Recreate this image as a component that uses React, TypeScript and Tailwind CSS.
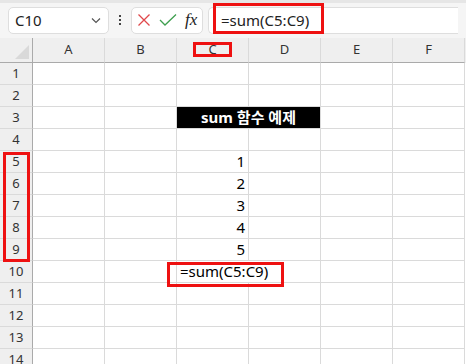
import React from "react";

const cols = ["A", "B", "C", "D", "E", "F"];
const rows = Array.from({ length: 14 }, (_, i) => i + 1);

const font = { fontFamily: '"Noto Sans", "Noto Sans CJK KR", sans-serif' };

function Cell({ row, col }: { row: number; col: string }) {
    const base = "h-[22px] w-[72px] shrink-0 border-r border-b border-[#dadada] text-[15px] text-black leading-[21px]";
    if (col === "C" && row >= 5 && row <= 9) {
        return <div className={`${base} pr-[3px] text-right`}>{row - 4}</div>;
    }
    if (col === "C" && row === 10) {
        return (
            <div className={`${base} relative z-10 overflow-visible whitespace-nowrap border-r-0 pl-[3px]`}>
                =sum(C5:C9)
            </div>
        );
    }
    return <div className={base} />;
}

export default function App() {
    return (
        <div className="relative h-[364px] w-[466px] overflow-hidden bg-white" style={font}>
            {/* Formula toolbar */}
            <div className="flex h-[38px] items-center gap-[5px] border-t-[3px] border-[#e6e6e6] bg-[#f5f5f5] px-[8px] pb-[1px]">
                <div className="flex h-[27px] w-[101px] items-center justify-between rounded-[5px] border border-[#dedede] bg-white pl-[6px] pr-[6px]">
                    <span className="text-[15px] text-[#222]">C10</span>
                    <svg width="12" height="12" viewBox="0 0 12 12" fill="none" stroke="#555" strokeWidth="1.2">
                        <path d="M2 4.5 L6 8.5 L10 4.5" />
                    </svg>
                </div>
                <div className="flex w-[12px] flex-col items-center gap-[2px]">
                    <span className="h-[2px] w-[2px] bg-[#444]" />
                    <span className="h-[2px] w-[2px] bg-[#444]" />
                    <span className="h-[2px] w-[2px] bg-[#444]" />
                </div>
                <div className="flex h-[27px] w-[72px] items-center gap-[8px] rounded-[5px] border border-[#dedede] bg-white pl-[5px]">
                    <svg width="14" height="14" viewBox="0 0 14 14" fill="none" stroke="#e0484b" strokeWidth="1.3">
                        <path d="M1.5 1.5 L12.5 12.5 M12.5 1.5 L1.5 12.5" />
                    </svg>
                    <svg width="18" height="14" viewBox="0 0 18 14" fill="none" stroke="#3f9f4f" strokeWidth="1.3">
                        <path d="M1 7 L6 12 L17 1.5" />
                    </svg>
                    <span className="text-[17px] italic text-[#222]" style={{ fontFamily: '"Liberation Serif", serif' }}>
                        fx
                    </span>
                </div>
                <div className="flex h-[27px] flex-1 items-center rounded-l-[5px] border border-r-0 border-[#dedede] bg-white pl-[12px]">
                    <span className="text-[15px] text-[#222]">=sum(C5:C9)</span>
                </div>
            </div>

            {/* Column headers */}
            <div className="flex h-[25px] bg-[#efefef]">
                <div className="flex h-full w-[33px] shrink-0 items-end justify-end border-r border-b border-[#aaaaaa] pb-[3px] pr-[3px]">
                    <svg width="14" height="14" viewBox="0 0 14 14">
                        <path d="M14 0 L14 14 L0 14 Z" fill="#d9d9d9" />
                    </svg>
                </div>
                {cols.map((c) => (
                    <div
                        key={c}
                        className="flex h-full w-[72px] shrink-0 items-center justify-center border-r border-b border-r-[#dadada] border-b-[#aaaaaa] text-[13px] text-[#333]"
                    >
                        {c}
                    </div>
                ))}
            </div>

            {/* Rows */}
            {rows.map((r) => (
                <div key={r} className="flex">
                    <div className="flex h-[22px] w-[33px] shrink-0 items-center justify-center border-r border-b border-r-[#aaaaaa] border-b-[#dadada] bg-[#efefef] text-[13px] text-[#333]">
                        {r}
                    </div>
                    {r === 3 ? (
                        <>
                            <div className="h-[22px] w-[72px] shrink-0 border-r border-b border-[#dadada]" />
                            <div className="h-[22px] w-[72px] shrink-0 border-r border-b border-[#dadada]" />
                            <div className="flex h-[22px] w-[144px] shrink-0 items-center justify-center border-r border-b border-[#dadada] bg-black text-[15px] font-bold text-white">
                                sum 함수 예제
                            </div>
                            <div className="h-[22px] w-[72px] shrink-0 border-r border-b border-[#dadada]" />
                            <div className="h-[22px] w-[72px] shrink-0 border-r border-b border-[#dadada]" />
                        </>
                    ) : (
                        cols.map((c) => <Cell key={c} row={r} col={c} />)
                    )}
                </div>
            ))}

            {/* Red highlight annotations */}
            <div className="pointer-events-none absolute left-[213px] top-[3px] h-[31px] w-[111px] border-[3px] border-[#ee1111]" />
            <div className="pointer-events-none absolute left-[193px] top-[42px] h-[15px] w-[39px] border-[3px] border-[#ee1111]" />
            <div className="pointer-events-none absolute left-[3px] top-[152px] h-[110px] w-[27px] border-[3px] border-[#ee1111]" />
            <div className="pointer-events-none absolute left-[167px] top-[262px] h-[25px] w-[117px] border-[3px] border-[#ee1111]" />
        </div>
    );
}
